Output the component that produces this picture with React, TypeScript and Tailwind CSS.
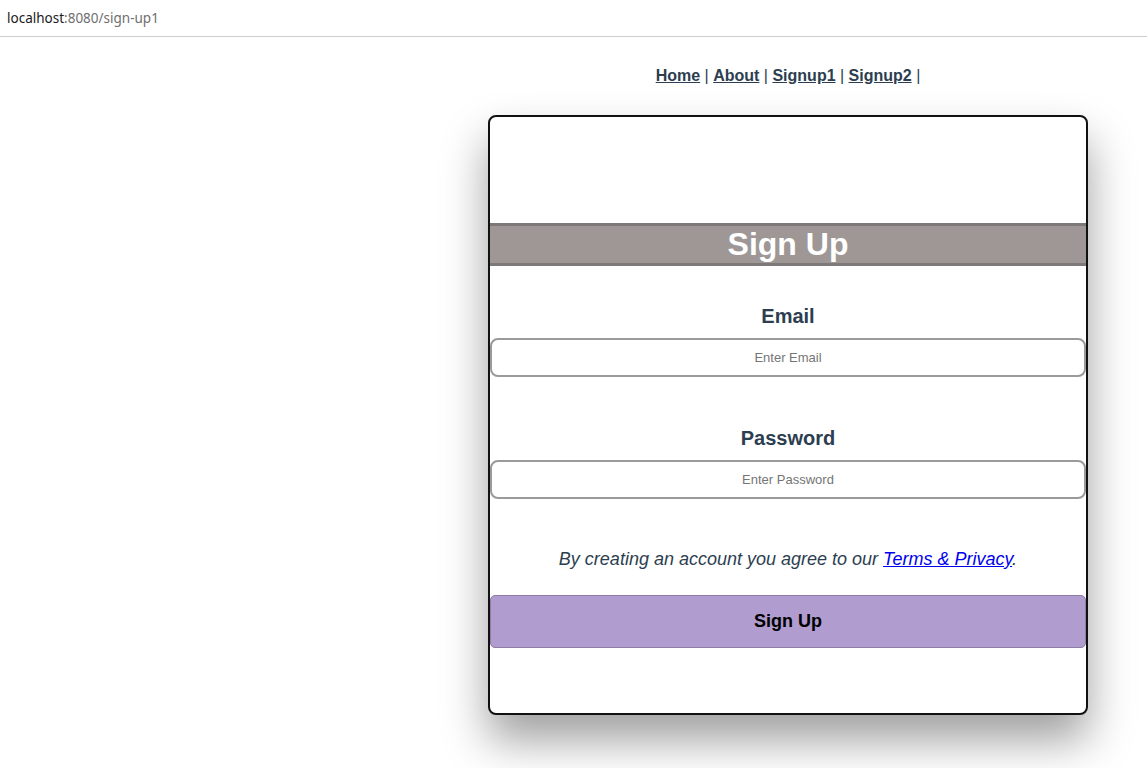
import React from "react";

export default function App() {
  return (
    <div className="min-h-[768px] bg-white" style={{ fontFamily: '"Liberation Sans", Arial, sans-serif' }}>
      <div className="h-[37px] border-b border-[#cfcfcf] flex items-center pl-[7px] text-[13.5px]" style={{ fontFamily: '"Noto Sans", "DejaVu Sans", sans-serif' }}>
        <span className="text-[#1a1a1a]">localhost</span>
        <span className="text-[#6f6f6f]">:8080/sign-up1</span>
      </div>
      <div className="ml-[488px] w-[600px] text-[#2c3e50] text-center">
        <nav className="pt-[29px] h-[78px] text-[16px] leading-[20px] font-bold">
          <a className="underline text-[#2c3e50]" href="#">Home</a>
          <span className="font-normal"> | </span>
          <a className="underline text-[#2c3e50]" href="#">About</a>
          <span className="font-normal"> | </span>
          <a className="underline text-[#2c3e50]" href="#">Signup1</a>
          <span className="font-normal"> | </span>
          <a className="underline text-[#2c3e50]" href="#">Signup2</a>
          <span className="font-normal"> |</span>
        </nav>
        <div className="h-[600px] border-2 border-[#111] rounded-[8px] bg-white shadow-[0_25px_45px_rgba(0,0,0,0.38)] pt-[106px]">
          <h1 className="h-[43px] border-y-[3px] border-[#7e7979] bg-[#9e9796] text-white text-[32px] font-bold leading-[37px]">
            Sign Up
          </h1>
          <div className="mt-[38px] text-[20px] leading-[24px] font-bold">Email</div>
          <input
            className="mt-[10px] w-full h-[39px] border-2 border-[#9a9a9a] rounded-[8px] text-center text-[13px] placeholder:text-[#757575] outline-none"
            placeholder="Enter Email"
          />
          <div className="mt-[49px] text-[20px] leading-[24px] font-bold">Password</div>
          <input
            type="password"
            className="mt-[10px] w-full h-[39px] border-2 border-[#9a9a9a] rounded-[8px] text-center text-[13px] placeholder:text-[#757575] outline-none"
            placeholder="Enter Password"
          />
          <p className="mt-[49px] text-[18px] leading-[22px] italic">
            By creating an account you agree to our{" "}
            <a href="#" className="text-[#0000ee] underline">Terms &amp; Privacy</a>.
          </p>
          <button className="mt-[25px] w-full h-[53px] bg-[#b09ccf] border border-[#8c7ca6] rounded-[5px] text-black text-[18px] font-bold">
            Sign Up
          </button>
        </div>
      </div>
    </div>
  );
}
